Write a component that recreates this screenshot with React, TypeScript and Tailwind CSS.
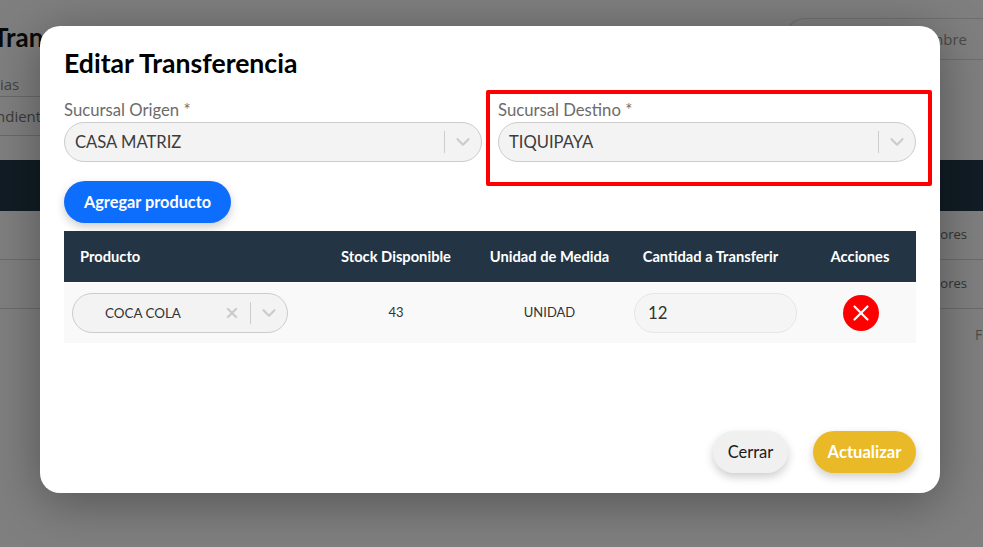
import { X, ChevronDown } from 'lucide-react'

function SelectBox({ value }: { value: string }) {
  return (
    <div className="flex h-10 items-center rounded-[20px] border border-[#cccccc] bg-[#f3f3f3] pl-[10px] text-[#3c3c3c]">
      <span className="flex-1 text-[16.6px]">{value}</span>
      <span className="h-[22px] w-px bg-[#cccccc]" />
      <span className="flex w-9 justify-center">
        <ChevronDown className="h-[22px] w-[22px] text-[#cccccc]" strokeWidth={2.5} />
      </span>
    </div>
  )
}

function Background() {
  return (
    <div className="h-[547px] overflow-hidden bg-[#7f7f7f] font-['Open_Sans',sans-serif] text-[#333333]">
      <div className="flex h-[72px] justify-between pt-[18px]">
        <h1 className="ml-[-7px] whitespace-nowrap font-['Lato',sans-serif] text-[26px] font-bold leading-[38px] text-[#0a0a0a]">Transferencias</h1>
        <div className="h-[42px] w-[198px] rounded-tl-[20px] border-t border-b border-l border-[#6f6f6f] pr-4 text-right text-[15px] leading-[40px] text-[#4a4a4a]">
          Nombre
        </div>
      </div>
      <div className="h-[25px] w-[400px] border-b border-[#696969] text-[15px] leading-[24px] text-[#444444]">ias</div>
      <div className="h-[39px] w-[400px] border-b border-[#696969] pl-0 text-[15px] leading-[38px] text-[#3a3a3a]">
        <span className="ml-[-4px]">ndiente</span>
      </div>
      <div className="mt-[24px] h-[51px] bg-[#111c24]" />
      <div className="flex h-[49px] items-center justify-end border-b border-[#6b6b6b] pr-4 text-[13px]">lores</div>
      <div className="flex h-[49px] items-center justify-end border-b border-[#6b6b6b] pr-4 text-[13px]">lores</div>
      <div className="ml-[975px] mt-[16px] whitespace-nowrap text-[14px] leading-[20px] text-[#4a4a4a]">Filas</div>
    </div>
  )
}

export default function App() {
  const headers = ['Stock Disponible', 'Unidad de Medida', 'Cantidad a Transferir', 'Acciones']
  return (
    <div className="relative h-[547px] w-[983px] overflow-hidden font-['Lato','Noto_Sans',sans-serif]">
      <Background />

      {/* modal */}
      <div className="absolute left-[40px] top-[26px] h-[467px] w-[900px] rounded-[20px] bg-white px-6 shadow-[0_8px_50px_rgba(0,0,0,0.35)]">
        <h2 className="pt-[19px] text-[26.6px] font-bold leading-[36px] text-black">Editar Transferencia</h2>

        <div className="mt-[17px] grid grid-cols-2 gap-4">
          <div>
            <label className="block text-[16.7px] leading-[24px] text-[#6c6c6c]">Sucursal Origen *</label>
            <SelectBox value="CASA MATRIZ" />
          </div>
          <div className="relative">
            <label className="block text-[16.7px] leading-[24px] text-[#6c6c6c]">Sucursal Destino *</label>
            <SelectBox value="TIQUIPAYA" />
            <div className="absolute left-[-12px] top-[-8px] h-[96px] w-[446px] rounded-[2px] border-[4px] border-[#ff0000]" />
          </div>
        </div>

        <button className="mt-[19px] flex h-[42px] w-[167px] items-center justify-center rounded-[21px] bg-[#0d6efd] text-[16.3px] font-bold text-white shadow-[0_4px_10px_rgba(0,0,0,0.2)]">
          Agregar producto
        </button>

        <div className="mt-[8px]">
          <div className="flex h-[51px] items-center bg-[#233544] text-[14.7px] font-bold text-white">
            <div className="w-[255px] pl-4">Producto</div>
            <div className="w-[154px] text-center">{headers[0]}</div>
            <div className="w-[153px] text-center">{headers[1]}</div>
            <div className="w-[169px] text-center">{headers[2]}</div>
            <div className="flex-1 pl-[9px] text-center">{headers[3]}</div>
          </div>
          <div className="flex h-[61px] items-center border-t border-white bg-[#f9f9f9] text-[13px] text-[#333333]">
            <div className="w-[255px] pl-2">
              <div className="flex h-10 w-[216px] items-center rounded-[20px] border border-[#cccccc] bg-[#f3f3f3]">
                <span className="flex-1 pl-[32px] text-[13.4px]">COCA COLA</span>
                <X className="mr-[10px] h-4 w-4 text-[#cccccc]" strokeWidth={3.5} />
                <span className="h-[22px] w-px bg-[#cccccc]" />
                <span className="flex w-9 justify-center">
                  <ChevronDown className="h-[22px] w-[22px] text-[#cccccc]" strokeWidth={2.5} />
                </span>
              </div>
            </div>
            <div className="w-[154px] text-center">43</div>
            <div className="w-[153px] text-center">UNIDAD</div>
            <div className="w-[169px] pl-2">
              <div className="flex h-10 w-[163px] items-center rounded-[20px] border border-[#e6e6e6] bg-[#f5f5f5] pl-[13px] text-[16.8px]">12</div>
            </div>
            <div className="flex flex-1 justify-center pl-[11px]">
              <span className="flex h-9 w-9 items-center justify-center rounded-full bg-[#ff0000]">
                <X className="h-[26px] w-[26px] text-white" strokeWidth={2} />
              </span>
            </div>
          </div>
        </div>

        <div className="absolute bottom-[20px] right-6 flex gap-[25px]">
          <button className="h-[42px] w-[75px] rounded-[21px] bg-[#f0f0f0] text-[16.5px] text-[#1a1a1a] shadow-[0_4px_10px_rgba(0,0,0,0.2)]">Cerrar</button>
          <button className="h-[42px] w-[103px] rounded-[21px] bg-[#e9b928] text-[16.6px] font-bold text-white shadow-[0_4px_10px_rgba(0,0,0,0.2)]">Actualizar</button>
        </div>
      </div>
    </div>
  )
}
